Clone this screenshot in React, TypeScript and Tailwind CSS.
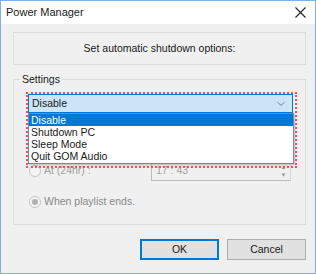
import { ChevronDown } from 'lucide-react';

const font = { fontFamily: '"Liberation Sans", Arial, sans-serif' };

const options = ['Disable', 'Shutdown PC', 'Sleep Mode', 'Quit GOM Audio'];

const App: React.FC = () => {
  return (
    <div
      className="w-[316px] h-[274px] border border-[#7db1e6] bg-[#f0f0f0] flex flex-col text-[10.5px] text-[#1a1a1a] relative overflow-hidden"
      style={font}
    >
      <div className="h-[23px] bg-white flex items-center justify-between pl-[5px] pr-[9px]">
        <span className="text-[11px] leading-none">Power Manager</span>
        <svg width="11" height="11" viewBox="0 0 11 11" className="text-[#222]">
          <path d="M0.5 0.5 L10.5 10.5 M10.5 0.5 L0.5 10.5" stroke="currentColor" strokeWidth="1.1" />
        </svg>
      </div>

      <div className="pl-[12px] pr-[9px] flex flex-col">
        <div className="mt-[8px] h-[33px] border border-[#dcdcdc] flex items-center justify-center">
          <span className="leading-none">Set automatic shutdown options:</span>
        </div>

        <div className="mt-[14px] h-[146px] border border-[#dcdcdc] relative flex flex-col pl-[14px] pr-[12px]">
          <span className="absolute -top-[8px] left-[6px] bg-[#f0f0f0] px-[2px] leading-[14px]">Settings</span>

          <div className="mt-[14px] h-[19px] border border-[#0078d7] bg-[#cce4f7] flex items-center justify-between pl-[3px] pr-[5px]">
            <span className="leading-none">Disable</span>
            <ChevronDown size={12} strokeWidth={1.5} className="text-[#555]" />
          </div>

          <div className="mt-[48px] flex items-center justify-between">
            <label className="flex items-center gap-[3px] text-[#a0a0a0] ml-[1px]">
              <span className="w-[12px] h-[12px] rounded-full border border-[#c4c4c4] bg-[#f4f4f4] shrink-0" />
              <span>At (24hr) :</span>
            </label>
            <div className="w-[140px] shrink-0 h-[20px] border border-[#bcbcbc] border-r-[#d9d9d9] bg-[#f0f0f0] flex items-center justify-between mr-[2px]">
              <span className="pl-[4px] text-[#a0a0a0]">17 : 43</span>
              <div className="w-[13px] h-full flex flex-col items-center justify-between py-[2px] text-[#9a9a9a] text-[6px] leading-none">
                <span>▲</span>
                <span>▼</span>
              </div>
            </div>
          </div>

          <label className="mt-[13px] flex items-center gap-[3px] text-[#8a8a8a] ml-[1px]">
            <span className="w-[12px] h-[12px] rounded-full border border-[#c4c4c4] bg-[#f4f4f4] flex items-center justify-center shrink-0">
              <span className="w-[6px] h-[6px] rounded-full bg-[#b0b0b0]" />
            </span>
            <span>When playlist ends.</span>
          </label>
        </div>

        <div className="mt-[14px] flex justify-end gap-[8px]">
          <button className="w-[79px] h-[21px] border-2 border-[#0078d7] bg-[#e1e1e1] leading-none">OK</button>
          <button className="w-[79px] h-[21px] border border-[#adadad] bg-[#e1e1e1] leading-none">Cancel</button>
        </div>
      </div>

      <div className="absolute left-[27px] top-[112px] w-[266px] h-[51px] bg-white border border-[#5f8fc4] shadow-[1px_1px_2px_rgba(0,0,0,0.25)] flex flex-col">
        {options.map((o, i) => (
          <div
            key={o}
            className={
              i === 0
                ? 'h-[12px] bg-[#0078d7] text-white pl-[2px] flex items-center leading-none'
                : 'h-[12px] pl-[2px] flex items-center leading-none'
            }
          >
            {o}
          </div>
        ))}
      </div>

      <div className="absolute left-[25px] top-[91px] w-[271px] h-[76px] border-2 border-dotted border-[#f0525c] pointer-events-none" />
    </div>
  );
};

export default App;
